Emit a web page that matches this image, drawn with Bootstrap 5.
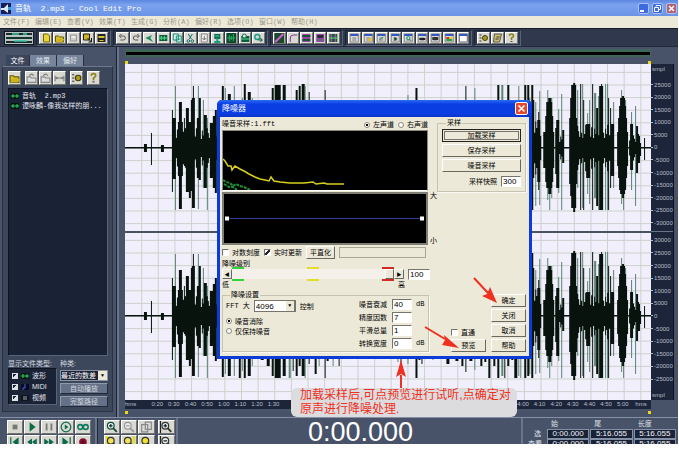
<!DOCTYPE html>
<html lang="zh">
<head>
<meta charset="utf-8">
<meta name="viewport" content="width=device-width, initial-scale=1">
<title>音轨 2.mp3 - Cool Edit Pro</title>
<link href="https://cdn.jsdelivr.net/npm/bootstrap@5.3.0/dist/css/bootstrap.min.css" rel="stylesheet">
<style>
body{background:#fff;font-family:"Liberation Sans","Noto Sans CJK SC",sans-serif;font-size:7px;line-height:9px;color:#000;overflow:hidden}
button,input,select{font:inherit;color:inherit;padding:0;margin:0;border-radius:0}
.app-win{height:calc(100vh - 17px);min-height:444px;margin-right:1px;background:#485268}
.mono{font-family:"Liberation Mono","Noto Sans CJK SC",monospace}
.titlebar{height:16px;background:linear-gradient(#5a87e0,#7ba1ee 30%,#6b94e6);color:#fff;font-size:8px;padding:0 1px}
.win-btns{gap:3px}
.win-btn{width:11px;height:11px;border:1px solid #a9c1f4;border-radius:2px;background:#3c6be0;line-height:0}
.win-btn.x{background:#b4606f}
.menubar{height:12px;background:#ece9d8;color:#9c988c;padding-left:3px}
.menubar a{width:32px;color:inherit;text-decoration:none;white-space:nowrap}
.toolbar{height:19px;background:#2f384c;border-top:1px solid #171d2a;border-bottom:1px solid #20283a;padding:1px 0 1px 2px}
.tgroup{height:16px;padding:1px 2px;border:1px solid #1b2232;border-right-color:#56617a;border-bottom-color:#56617a;margin-right:2px;gap:1px}
.ib{flex:1 1 0;min-width:0;background:#d9d9d2;border:1px solid #fff;border-right-color:#74746e;border-bottom-color:#74746e;display:flex;align-items:center;justify-content:center}
.ib svg{width:100%;height:100%}
.g1{width:75px}.g2{width:155px}.g3{width:73px}.g4{width:127px}.g5{width:47px}
.logo{width:30px;height:14px;background:#b8c0bd;border:1px solid #10161f;margin:1px 2px 0 2px}
.side{width:117px;padding:8px 3px 5px 2px;border-right:1px solid #1b2333}
.side-tab{height:11px;width:27px;background:#76859b;color:#e3e8ef;border:0;border-right:1px solid #28303f;line-height:10px}
.side-tab.on{width:24px;background:#3c465b;color:#fff}
.side-panel{background:#3d475c;border:1px solid #2a3244;border-top-color:#6d788e;padding:4px 4px 4px 5px;color:#d3d8df}
.side-tools{height:14px;gap:4px}
.side-tools .ib{flex:0 0 13px}
.side-tools .ib + .ib{margin-left:1px}
.well{background:#1a2236;border:1px solid #0e1422;border-right-color:#59647a;border-bottom-color:#59647a;color:#e4e7ee}
.files{padding:2px;margin:3px 0}
.files a{color:inherit;text-decoration:none;line-height:10px;white-space:pre;gap:3px}
.types{width:49px;height:37px;padding:1px 3px}
.types label{height:11px;gap:3px}
.types input{appearance:none;width:6px;height:6px;border:1px solid #dde1e6;background:linear-gradient(135deg,#1a2236 50%,#dde1e6 50%)}
.types svg,.files svg{width:8px;height:6px;flex:none}
.kind{width:48px;gap:2px}
.kind select{height:11px;width:48px;border:1px solid #8a93a2;background:#1a2236;color:#fff;appearance:none;overflow:hidden}
.kind .pick{display:grid}
.kind .pick > *{grid-area:1/1}
.kind .pick span{justify-self:end;width:9px;background:#ece9d8;color:#000;font-size:5px;text-align:center;margin:1px;pointer-events:none}
.kind button{height:11px;border:1px solid #8e9aac;border-right-color:#222a3a;border-bottom-color:#222a3a;background:#657188;color:#d2d7df;line-height:9px}
.stage{padding:2px 4px 3px 6px;border-left:2px solid #69758b;min-width:0}
.overview{height:8px;background:#000;border:solid #3e6557;border-width:3px 1px 2px;margin-right:23px}
.marks{height:7px;margin-right:23px}
.marks.low{height:5px}
.marks i{width:3px;height:3px;background:#e8d820}
.plot{background:#f1effc;min-width:0}
.plot svg{display:block;width:100%;height:100%}
.vruler{width:23px;background:#1c2539;color:#b9bfca;border-right:1px solid #0d1320;font-size:6px}
.vruler .ch{padding:2px 0}
.vruler .ch:first-child{border-bottom:1px solid #69738a}
.vruler .ch div{flex:1 1 0;min-height:0;display:flex;align-items:center;line-height:6px}
.vruler .ch div::before{content:"";width:2px;height:1px;background:#b9bfca;margin-right:1px}
.vruler .ch .u{align-items:flex-start;padding-left:1px}
.vruler .ch .u.end{align-items:flex-end}
.vruler .ch .u::before{content:none}
.hruler{height:9px;background:#1c2539;color:#b9bfca;margin-right:23px;font-size:6px}
.hruler span{flex:16.67 1 0;min-width:0;text-align:center;white-space:nowrap}
.hruler span:first-child{flex-grow:24;text-align:left}
.hruler span:last-child{flex-grow:20}
.deck{height:27px;overflow:hidden;border-top:1px solid #8390a6;background:#485268;color:#dfe3ea}
.keys{display:grid;grid-template-columns:repeat(5,16px);grid-auto-rows:14px;gap:1px;padding:2px 4px 0 7px;border-right:2px solid #69758b}
.keys.z{grid-template-columns:16px 16px 17px 17px;padding:2px 3px 0 6px;border-left:1px solid #20283a}
.keys.z .gapl{margin-left:2px;margin-right:-2px}
.clock{font-size:27px;line-height:24px;color:#fff;padding:2px 0 0 22px}
.times{border-left:2px solid #69758b;width:157px;padding:1px 1px 0 3px}
.times table{width:100%;border-collapse:separate;border-spacing:1px 0;table-layout:fixed}
.times th{font-weight:400;line-height:8px}
.times thead th{padding-left:4px}
.times col:first-child{width:19px}
.times tbody th{text-align:right;padding-right:5px;white-space:nowrap}
.times td{background:#1a2236;border:1px solid #8490a5;color:#f0f2f6;font-size:8px;line-height:8px;text-align:center;padding:0}
.dlg{position:absolute;left:217px;top:100px;width:315px;background:#ece9d8;border:3px solid #0b3bd9;border-top:0;border-radius:5px 5px 0 0}
.dlg-title{height:17px;margin:0 -3px;padding:0 4px 0 5px;border-radius:5px 5px 0 0;background:linear-gradient(#2a6af4,#0a3ee2 25%,#0a3ee2 80%,#0a35c8);color:#fff;font-size:8px}
.close-x{width:13px;height:13px;background:#e2492f;border:1px solid #fff;border-radius:2px;line-height:0}
.dlg-body{padding:2px 3px 4px 2px}
.left-col{width:208px}
.right-col{width:89px}
.dlg label{white-space:nowrap}
.opt{display:inline-flex;align-items:center;gap:3px}
.opt input[type=radio]{appearance:none;width:6px;height:6px;border:1px solid #8b897c;border-radius:50%;background:#fff}
.opt input[type=radio]:checked{background:radial-gradient(#000 35%,#fff 45%)}
.opt input[type=checkbox]{appearance:none;width:7px;height:7px;border:1px solid #76746a;border-right-color:#fff;border-bottom-color:#fff;background:#fff}
.opt input[type=checkbox]:checked{background:linear-gradient(135deg,#fff 30%,#222 40%,#222 60%,#fff 70%)}
.head-row{height:11px}
.head-row > div{gap:4px;padding-right:2px}
.graph{background:#000;width:206px}
.graph svg{display:block;width:100%;height:100%}
.spec{height:61px;border:1px solid #8b897c;border-bottom-color:#fff}
.curve{height:53px;border:2px solid #807e74;margin-top:1px}
.scale{margin-left:2px;width:0}
.check-row{height:15px;gap:4px}
.pb{height:13px;border:1px solid #fff;border-right-color:#6b695f;border-bottom-color:#6b695f;background:#ece9d8;line-height:11px;text-align:center}
.pb.flat{width:29px}
.pb.def{border:1px solid #222;outline:1px solid #77756b;outline-offset:-3px}
.tf{height:11px;border:1px solid #77756b;border-right-color:#fff;border-bottom-color:#fff;background:#fff;padding-left:1px;font-size:8px;min-width:0}
.tf.lvl{width:22px;margin-left:4px}
.tf.snap{width:20px}
.note-field{height:11px;border:1px solid #aaa797;width:87px;background:#ece9d8}
.sl{display:grid;width:182px;height:14px;grid-template-columns:10px 1fr 10px;align-items:center}
.sl button{height:10px;border:1px solid #fff;border-right-color:#6b695f;border-bottom-color:#6b695f;background:#ece9d8;font-size:5px;line-height:7px}
.sl .track{display:grid;height:14px}
.sl .track > *{grid-area:1/1}
.sl input{appearance:none;width:100%;height:10px;align-self:center;background:#f5f1ea}
.sl input::-webkit-slider-thumb{appearance:none;width:9px;height:10px;background:#ece9d8;border:1px solid #fff;border-right-color:#6b695f;border-bottom-color:#6b695f}
.ticks{pointer-events:none}
.ticks i{width:12px;border:solid;border-width:2px 0}
.ticks .lo{border-color:#2fd53b}.ticks .mid{border-color:#e4de2a}.ticks .hi{border-color:#d42a20}
.ends{width:183px;line-height:8px}
.fs{border:1px solid #c6c3b2;box-shadow:1px 1px 0 #fbfaf2;margin:0;min-width:0}
.fs legend{float:none;width:auto;font-size:7px;line-height:8px;margin:0 0 0 4px;padding:0 1px}
.nr{width:207px;padding:0 1px 2px 3px;margin-top:2px}
.fft-row{height:14px;gap:4px}
.modes{margin-top:3px}
.modes label{height:10px}
.params{display:grid;grid-template-columns:29px 20px 11px;column-gap:4px;row-gap:2px;align-items:center}
.smp{padding:2px 4px 4px;gap:2px}
.snap-row{gap:4px;margin-top:2px}
.ops{display:grid;grid-template-columns:35px 35px;column-gap:5px;row-gap:2px}
.fft{height:12px;width:42px;border:1px solid #77756b;background:#fff;font-size:8px;padding-left:1px;appearance:none}
.fftp{display:grid}.fftp>*{grid-area:1/1}
.fftp span{justify-self:end;width:9px;margin:1px;background:#ece9d8;font-size:5px;text-align:center;border-right:1px solid #77756b;pointer-events:none}
.over{position:absolute;pointer-events:none}
.arrows{left:420px;top:272px}
.arrow-up{left:395px;top:359px}
.bubble{position:absolute;left:291px;top:388px;width:226px;background:#dcdcdf;border-radius:6px;padding:0 0 1px 9px;color:#f0301c;font-size:12px;line-height:14px;white-space:nowrap}
</style>
<script src="https://cdn.jsdelivr.net/npm/bootstrap@5.3.0/dist/js/bootstrap.bundle.min.js"></script>
</head>
<body>
<main class="app-win d-flex flex-column overflow-hidden">
  <header class="titlebar mono d-flex align-items-center">
    <svg width="10" height="11" viewBox="0 0 10 11"><rect width="10" height="11" fill="#14205c"/><path d="M0 5h3l4-4v9L3 7H0z" fill="#dfe8fa"/><path d="M7 4h3v3H7z" fill="#35a0c8"/></svg>
    <span class="ms-1 text-nowrap">音轨 &nbsp;2.mp3 - Cool Edit Pro</span>
    <div class="win-btns d-flex ms-auto">
      <button class="win-btn" aria-label="最小化"><svg width="9" height="9"><path d="M1 7h4" stroke="#fff" stroke-width="2"/></svg></button>
      <button class="win-btn" aria-label="还原"><svg width="9" height="9"><path d="M3 2.500V1.500h4.500v4H6M1.500 3.500h4v4h-4z" fill="none" stroke="#fff"/></svg></button>
      <button class="win-btn x" aria-label="关闭"><svg width="9" height="9"><path d="M2 2l5 5M7 2L2 7" stroke="#fff" stroke-width="1.500"/></svg></button>
    </div>
  </header>
  <nav class="menubar mono d-flex align-items-center">
    <a href="#">文件(F)</a><a href="#">编辑(E)</a><a href="#">查看(V)</a><a href="#">效果(T)</a><a href="#">生成(G)</a><a href="#">分析(A)</a><a href="#">偏好(R)</a><a href="#">选项(O)</a><a href="#">窗口(W)</a><a href="#">帮助(H)</a>
  </nav>
  <div class="toolbar d-flex">
    <div class="logo"><svg width="28" height="12" viewBox="0 0 28 12"><path d="M0 0h28v12H0z" fill="#b9c4c0"/><path d="M1 2h26M1 10h26" stroke="#1d2a2c" stroke-width="2"/><path d="M1 6h26" stroke="#12332e" stroke-width="2"/><path d="M7 2h7M18 2h4M9 9h13" stroke="#36c2a6" stroke-width="1.500"/></svg></div>
    <div class="tgroup g1 d-flex" data-icons="new open save saveas batch"></div>
    <div class="tgroup g2 d-flex" data-icons="undo redo trim wave copy cut paste mixp wave2 find loop"></div>
    <div class="tgroup g3 d-flex" data-icons="fx1 curve fx2 fx3 fx4"></div>
    <div class="tgroup g4 d-flex" data-icons="win win2 win3 playw zoomw timew bars color panel"></div>
    <div class="tgroup g5 d-flex" data-icons="opts script help"></div>
  </div>

  <div class="d-flex flex-grow-1 overflow-hidden">
    <aside class="side d-flex flex-column">
      <div class="d-flex ps-1"><button class="side-tab on">文件</button><button class="side-tab">效果</button><button class="side-tab">偏好</button></div>
      <div class="side-panel d-flex flex-column flex-grow-1">
        <div class="side-tools d-flex"><div class="d-flex" data-icons="open"></div><div class="d-flex" data-icons="cf cf cfw"></div><div class="d-flex" data-icons="opts"></div><div class="d-flex" data-icons="help"></div></div>
        <div class="well files mono flex-grow-1">
          <a href="#" class="d-flex align-items-center"><svg viewBox="0 0 8 6"><rect width="8" height="6" fill="#03170c"/><path d="M0 3h8M2 1v4M6 1v4" stroke="#2fd06a"/></svg>音轨  2.mp3</a>
          <a href="#" class="d-flex align-items-center"><svg viewBox="0 0 8 6"><rect width="8" height="6" fill="#03170c"/><path d="M0 3h8M2 1v4M6 1v4" stroke="#2fd06a"/></svg>谭咏麟-像我这样的朋...</a>
        </div>
        <div class="d-flex justify-content-between">
          <div><div>显示文件类型:</div>
            <div class="well types d-flex flex-column">
              <label class="d-flex align-items-center"><input type="checkbox" checked><svg viewBox="0 0 8 6"><rect width="8" height="6" fill="#03170c"/><path d="M0 3h8M2 1v4M6 1v4" stroke="#2fd06a"/></svg>波形</label>
              <label class="d-flex align-items-center"><input type="checkbox" checked><svg viewBox="0 0 8 6"><rect width="8" height="6" fill="#060b20"/><path d="M4 0v4H2v2" stroke="#4468e0" fill="none"/></svg>MIDI</label>
              <label class="d-flex align-items-center"><input type="checkbox" checked><svg viewBox="0 0 8 6"><rect width="8" height="6" fill="#10141c"/><path d="M2 2h4M2 4h4" stroke="#9aa3a8"/></svg>视频</label>
            </div></div>
          <div class="kind d-flex flex-column"><label for="kind">种类:</label>
            <div class="pick"><select id="kind"><option>最近的数差</option></select><span>▼</span></div>
            <button>自动播放</button><button>完整路径</button></div>
        </div>
      </div>
    </aside>

    <section class="stage d-flex flex-column flex-grow-1">
      <div class="overview"></div>
      <div class="marks d-flex justify-content-between align-items-end"><i></i><i></i></div>
      <div class="d-flex flex-grow-1 overflow-hidden">
        <div class="plot flex-grow-1"><svg id="wave" viewBox="124 64 527 336" preserveAspectRatio="none" role="img" aria-label="波形"></svg></div>
        <div class="vruler d-flex flex-column" id="vr"></div>
      </div>
      <div class="hruler d-flex" id="hr"></div>
      <div class="marks low d-flex justify-content-between align-items-end"><i></i><i></i></div>
    </section>
  </div>

  <footer class="deck d-flex">
    <div class="keys" data-icons="stop play pause playc inf start rew ff end rec"></div>
    <div class="keys z" id="zk" data-icons="zin zout zfull zv zl zr zs zv2"></div>
    <div class="clock flex-grow-1 text-center">0:00.000</div>
    <div class="times"><table><colgroup><col><col><col><col></colgroup>
      <thead><tr><th></th><th>始</th><th>尾</th><th>长度</th></tr></thead>
      <tbody><tr><th>选</th><td>0:00.000</td><td>5:16.055</td><td>5:16.055</td></tr>
      <tr><th>查看</th><td>0:00.000</td><td>5:16.055</td><td>5:16.055</td></tr></tbody></table></div>
  </footer>
</main>

<div class="dlg" role="dialog" aria-label="降噪器">
  <div class="dlg-title d-flex align-items-center justify-content-between">降噪器
    <button class="close-x" aria-label="关闭"><svg width="11" height="11"><path d="M2.500 2.500l6 6M8.500 2.500l-6 6" stroke="#fff" stroke-width="1.600"/></svg></button></div>
  <div class="dlg-body d-flex justify-content-between">
    <div class="left-col">
      <div class="head-row d-flex align-items-center justify-content-between"><span class="mono">噪音采样:1.fft</span>
        <div class="d-flex"><label class="opt"><input type="radio" name="c" checked>左声道</label><label class="opt"><input type="radio" name="c">右声道</label></div></div>
      <div class="graph spec"><svg viewBox="0 0 204 59" preserveAspectRatio="none"><path d="M0 28l2 2 3 5 3 0 1 4 3-4 5 3 4 2 5 3 6 3 5 2 5 1 4 1 2-4 3 4 6 1 10 1 14 0 9-1 3 2 8-1 3 1 8 0h9" fill="none" stroke="#d6cf1d" stroke-width="1.500"/><path d="M0 49l3 2 4 1 3 3 3-2 4 2 4 1 6 3M1 53l5 3 4 0 4 3" fill="none" stroke="#1f8f35" stroke-width="2" stroke-dasharray="3 1"/></svg></div>
      <div class="d-flex"><div class="graph curve flex-shrink-0"><svg viewBox="0 0 202 49" preserveAspectRatio="none"><path d="M1 24.500h199" stroke="#2c3f9e"/><path d="M1 22.500h4v4H1zM196 22.500h4v4h-4z" fill="#fff"/></svg></div>
        <div class="scale d-flex flex-column justify-content-between"><span>大</span><span>小</span></div></div>
      <div class="check-row d-flex align-items-center"><label class="opt">
        <input type="checkbox">对数刻度</label><label class="opt"><input type="checkbox" checked>实时更新</label><button class="pb flat">平直化</button><div class="note-field"></div></div>
      <div class="lh-1">降噪级别</div>
      <div class="d-flex align-items-center"><div class="sl"><button aria-label="减">◀</button><div class="track"><input type="range" value="100" aria-label="降噪级别"><div class="ticks d-flex justify-content-between"><i class="lo"></i><i class="mid"></i><i class="hi"></i></div></div><button aria-label="加">▶</button></div><input class="tf lvl" value="100" aria-label="级别"></div>
      <div class="ends d-flex justify-content-between"><span>低</span><span>高</span></div>
      <fieldset class="fs nr"><legend>降噪设置</legend>
        <div class="d-flex justify-content-between">
          <div><div class="fft-row d-flex align-items-center"><label for="fft" class="mono">FFT 大</label><div class="fftp"><select id="fft" class="fft"><option>4096</option></select><span>▼</span></div>控制</div>
            <div class="modes d-flex flex-column"><label class="opt"><input type="radio" name="m" checked>噪音消除</label><label class="opt"><input type="radio" name="m">仅保持噪音</label></div></div>
          <div class="params">
            <label for="a1">噪音衰减</label><input id="a1" class="tf" value="40"><span class="mono">dB</span>
            <label for="a2">精度因数</label><input id="a2" class="tf" value="7"><span></span>
            <label for="a3">平滑总量</label><input id="a3" class="tf" value="1"><span></span>
            <label for="a4">转换宽度</label><input id="a4" class="tf" value="0"><span class="mono">dB</span></div>
        </div></fieldset>
    </div>
    <div class="right-col d-flex flex-column justify-content-between">
      <fieldset class="fs smp d-flex flex-column"><legend>采样</legend>
        <button class="pb def">加载采样</button><button class="pb">保存采样</button><button class="pb">噪音采样</button>
        <div class="snap-row d-flex justify-content-end align-items-center"><label for="snap">采样快照</label><input id="snap" class="tf snap" value="300"></div></fieldset>
      <div class="ops align-self-end"><span></span><button class="pb">确定</button><span></span><button class="pb">关闭</button><label class="opt align-self-end"><input type="checkbox">直通</label><button class="pb">取消</button><button class="pb">预览</button><button class="pb">帮助</button></div>
    </div>
  </div>
</div>

<svg class="over arrows" width="82" height="82" viewBox="420 272 82 82"><path d="M474 278l14 15M425 327l20 12" stroke="#f03020" stroke-width="2"/><path d="M497 303l-15-7 5-2 3-7zM459 348l-17-3 3-5-1-5z" fill="#f03020"/></svg>
<div class="bubble">加载采样后,可点预览进行试听,点确定对<br>原声进行降噪处理.</div>
<svg class="over arrow-up" width="12" height="30"><path d="M6 16v13" stroke="#f03020" stroke-width="2"/><path d="M6 1l5 17-5-3-5 3z" fill="#f03020"/></svg>

<script>
const ic={
 new:'<path d="M3 1h4l2 2v6H3z" fill="#e8d436" stroke="#75680a"/>',
 open:'<path d="M1 3h3l1 1h4v5H1z" fill="#d8bf22" stroke="#665a08"/><path d="M3 6h7L8 9H1z" fill="#c9b31f"/>',
 save:'<path d="M2 2h6v6H2z" fill="#ccc" stroke="#999"/><path d="M3 3h4v2H3z" fill="#eee"/>',
 saveas:'<path d="M1 1h6v6H1z" fill="#c9b622" stroke="#222"/><path d="M5 5l4 4M9 5v4H6" stroke="#111" fill="none"/>',
 batch:'<path d="M1 1h8v8H1z" fill="#222"/><path d="M2 3h6v2H2z" fill="#d8c52c"/><path d="M3 7h4v1H3z" fill="#d8c52c"/>',
 undo:'<path d="M3 7h3a2 2 0 0 0 0-4H3M4 1L2 3l2 2" fill="none" stroke="#555"/>',
 redo:'<path d="M7 7H4a2 2 0 0 1 0-4h3M6 1l2 2-2 2" fill="none" stroke="#555"/>',
 trim:'<path d="M1 5l7-3-2 3 3 4-4-2z" fill="#1c8a5c"/>',
 wave:'<path d="M1 2h8v6H1z" fill="#0c5c3c"/><path d="M1 5h8M3 3v4M6 3v4" stroke="#50e08a"/>',
 copy:'<path d="M1 1h5v6H1zM4 3h5v6H4z" fill="#d8f0e8" stroke="#1c8f78"/><path d="M5 6h3" stroke="#1c8f78"/>',
 cut:'<path d="M3 1l3 5M7 1L4 6" stroke="#14706a"/><circle cx="3" cy="8" r="1.300" fill="none" stroke="#14706a"/><circle cx="7" cy="8" r="1.300" fill="none" stroke="#14706a"/>',
 paste:'<path d="M2 1h6v8H2z" fill="#eee" stroke="#888"/><path d="M5 3v4M3 5l2 2 2-2" stroke="#777" fill="none"/>',
 mixp:'<path d="M2 1h6v5H2z" fill="#0c6a50"/><path d="M3 3h4" stroke="#5fe0a0"/><path d="M5 5v4M2 9h6" stroke="#14a080" stroke-width="2"/>',
 wave2:'<path d="M0 0h10v10H0z" fill="#0d4a2b"/><path d="M1 5h8M3 2v6M5 3v4M7 1v7" stroke="#2fb060"/>',
 find:'<path d="M1 3h8v6H1z" fill="#0c5c3c"/><path d="M1 6h8" stroke="#50e08a"/><circle cx="4" cy="3" r="2" fill="#c9eadf" stroke="#1c6f58"/>',
 loop:'<circle cx="4" cy="4" r="2.500" fill="none" stroke="#1c9f88" stroke-width="1.500"/><path d="M5 7h4M7 5l2 2-2 2" stroke="#0a5a40" fill="none"/>',
 fx1:'<path d="M0 0h10v10H0z" fill="#1b4a2a"/><path d="M1 9l8-8" stroke="#d060d0" stroke-width="2"/>',
 curve:'<path d="M2 9V5q0-3 3-3h4" fill="none" stroke="#7a3a90"/>',
 fx2:'<path d="M1 1h8v8H1z" fill="#a040b0"/><path d="M1 3h8M1 7h8" stroke="#115a30" stroke-width="2"/>',
 fx3:'<path d="M1 1h8v8H1z" fill="#a040b0"/><path d="M2 2h6v3H2z" fill="#20302a"/><path d="M1 7h8" stroke="#2f8a50"/>',
 fx4:'<path d="M1 1h8v8H1z" fill="#205a34"/><path d="M3 1v8M7 1v8" stroke="#c050c8"/><path d="M1 5h8" stroke="#50e080"/>',
 win:'<path d="M1 1h8v8H1z" fill="#ddd" stroke="#888"/><path d="M1 1h8v2H1z" fill="#3558c0"/><path d="M3 5h4M3 7h4" stroke="#777"/>',
 opts:'<path d="M1 2h2M1 5h2M1 8h2" stroke="#333"/><circle cx="6.500" cy="5" r="2.500" fill="#a99b22" stroke="#443d08"/>',
 script:'<path d="M2 1h7L7 9H1z" fill="#cfc06a" stroke="#555"/><path d="M4 4h3M3 6h3" stroke="#333"/>',
 help:'<path d="M3 3q0-2 2-2t2 2q0 1-2 2v2" fill="none" stroke="#8b8118" stroke-width="1.500"/><path d="M4 8h2v1H4z" fill="#444"/>',
 cf:'<path d="M1 4h3l1 1h4v4H1z" fill="#ddd" stroke="#888"/><path d="M3 3q2-3 4 0" stroke="#777" fill="none"/>',
 cfw:'<path d="M1 3v5M9 3v5M2 5h6M3 4L2 5l1 1M7 4l1 1-1 1" stroke="#777" fill="none"/>',
 stop:'<path d="M3 3h4v4H3z" fill="#777"/>',play:'<path d="M3 1l5 4-5 4z" fill="#0c6a4c"/>',
 pause:'<path d="M3 2v6M7 2v6" stroke="#777" stroke-width="1.500"/>',
 playc:'<circle cx="5" cy="5" r="4" fill="none" stroke="#0c6a4c"/><path d="M4 3l3 2-3 2z" fill="#0c6a4c"/>',
 inf:'<circle cx="2.700" cy="5" r="2" fill="none" stroke="#0c7a5c" stroke-width="1.300"/><circle cx="7.300" cy="5" r="2" fill="none" stroke="#0c7a5c" stroke-width="1.300"/>',
 start:'<path d="M1 1h1v8H1zM8 1v8L3 5z" fill="#0c6a4c"/>',rew:'<path d="M5 2v6L1 5zM9 2v6L5 5z" fill="#0c6a4c"/>',
 ff:'<path d="M1 2v6l4-3zM5 2v6l4-3z" fill="#0c6a4c"/>',end:'<path d="M8 1h1v8H8zM2 1v8l5-4z" fill="#0c6a4c"/>',
 rec:'<circle cx="5" cy="5" r="3.200" fill="#8a1238"/><path d="M3 5h4M5 3v4" stroke="#5a0820"/>'
};
const w=x=>ic.win+x;
ic.win2=w('<path d="M5 5h3v3H5z" fill="#e0c020"/>');ic.win3=w('<path d="M3 7l4-3" stroke="#2a8a60"/>');
ic.playw=w('<path d="M4 4l3 2-3 2z" fill="#0a4a30"/>');ic.zoomw=w('<circle cx="5" cy="5" r="1.500" fill="#cfe" stroke="#286"/><path d="M6 6l2 2" stroke="#286"/>');
ic.timew=w('<path d="M2 5h6v2H2z" fill="#222"/>');ic.bars=w('<path d="M2 4h6v3H2z" fill="#333"/>');
ic.color=w('<path d="M2 4h3v2H2z" fill="#d03030"/><path d="M5 4h3v2H5z" fill="#e0d020"/><path d="M2 6h6v2H2z" fill="#30a040"/>');
ic.panel='<path d="M1 1h8v8H1z" fill="#fff" stroke="#667"/><path d="M1 1h8v2H1z" fill="#3558c0"/>';
const lens=(c,f,x)=>`<circle cx="4" cy="4" r="2.800" fill="${f}" stroke="${c}"/><path d="M6 6l3 3" stroke="${c}" stroke-width="1.500"/>${x}`;
ic.zin=lens('#164a38','#dff','<path d="M2.500 4h3M4 2.500v3" stroke="#222"/>');ic.zout=lens('#999','#eee','<path d="M2.500 4h3" stroke="#999"/>');
ic.zfull='<path d="M1 3h5v6H1zM4 1h5v6H4z" fill="#ddd" stroke="#888"/>';
ic.zv=lens('#333','#dee','<path d="M2.500 4h3M4 2.500v3M0 0v10" stroke="#222"/>');ic.zv2=lens('#333','#dee','<path d="M2.500 4h3M0 0v10" stroke="#222"/>');
ic.zl='<path d="M0 0h2v10H0z" fill="#e6dc20"/>'+lens('#333','#eee25a','');ic.zr='<path d="M8 0h2v10H8z" fill="#e6dc20"/>'+lens('#333','#eee25a','');ic.zs=lens('#333','#f0e030','');
document.querySelectorAll('[data-icons]').forEach(g=>{
  g.innerHTML=g.dataset.icons.split(' ').map(n=>`<button class="ib" aria-label="${n}"><svg viewBox="0 0 10 10">${ic[n]}</svg></button>`).join('');
});
document.querySelectorAll('#zk .ib:nth-child(4n)').forEach(b=>b.classList.add('gapl'));

/* bars: x, width, height above, height below; g = light trace */
const bars=`143,3,4,4 150,1,15,17 160,3,3,4 171,1,38,44 172,3,30,31 174,1,62,62g 178,3,46,61 177,5,26,28 183,1,30,18 185,3,40,44 188,2,26,50
190,4,48,43 192,1,62,55 191,3,50,60 196,2,30,30 197,1,62,61g 198,2,50,32 202,1,48,40g 203,3,33,40 206,1,30,62g 209,3,25,30 212,2,32,40 214,2,38,45
217,2,30,35 221,2,62,61 224,1,60,58g 227,3,54,60 233,1,62,60g 238,2,40,62 241,1,50,55g 243,2,64,62 247,3,56,60 251,1,50,50g 254,3,30,40
260,3,30,44 266,3,40,50 271,2,60,60 274,6,63,62 282,3,63,60 288,2,40,62g 292,1,40,55 295,2,58,60 298,2,62,50 301,3,64,60 304,1,62,62g 308,1,56,48 314,2,40,58 318,1,30,50g 324,1,58,62 326,2,46,45 332,1,30,50g 338,1,40,50
345,3,30,30 360,4,30,32 375,2,40,40 390,4,30,40 397,1,40,46g 400,1,35,50 407,1,53,48g 415,2,60,62 418,2,40,44 421,1,30,48 432,1,30,44g 446,3,40,48 449,1,48,40g
455,3,30,45 461,2,40,50 465,1,62,56 469,3,40,45 474,1,60,54g 480,2,30,50 484,2,40,46 488,2,40,62 493,2,40,50 497,2,63,62 501,2,63,60g 504,1,40,62 507,2,63,50 511,2,40,44 514,3,40,62 518,1,62,60g 520,1,40,62g 524,2,63,62 527,2,63,60
529,1,50,58g 531,2,63,62 533,1,48,30 535,1,46,58g 537,3,28,34 538,1,36,42 539,1,57,57g 543,11,16,20 545,8,32,34 546,6,46,40 547,1,58,52g 548,3,50,46 549,1,40,62g 551,1,50,50g
555,1,20,26 556,3,28,40 558,1,39,45g 561,1,54,62g 562,2,18,15 569,8,30,36 570,6,50,48 571,5,63,60 573,2,65,64 577,1,58,40g 580,1,64,62 582,1,64,60g 583,1,48,62 586,4,24,30 587,1,35,46g 589,1,48,56g 592,1,64,62 594,2,55,50g 596,2,40,58
598,1,52,62g 599,4,62,62 601,1,64,62 605,1,64,62g 607,1,64,62g 608,1,50,62 610,1,40,40 611,3,24,28 613,1,46,40g 617,11,16,18 618,9,30,30 619,7,42,42 620,5,50,46 621,1,58,56g 622,2,52,50 623,1,40,62g 625,1,48,40g
630,3,24,22 631,1,36,42g 635,1,42,58g 636,2,22,25 638,2,12,15 640,1,5,8 644,1,10,12`.split(/\s+/);
const body=[[171,60,18],[231,25,20],[258,35,22],[294,12,20],[312,18,12],[396,12,14],[412,10,16],[446,31,18],[481,48,22],[531,10,24],[555,9,12],[569,45,20],[629,11,12]];
let s='<path stroke="#cdd2cb" d="';
for(let x=124+16.67;x<651;x+=16.67)s+=`M${x.toFixed(1)} 64v336`;
for(const c of [148,316])for(let k=-6;k<=6;k++)s+=`M124 ${(c+k*12.6).toFixed(1)}h527`;
s+='"/>';
for(const c of [148,316]){
  let d='',g='';
  for(const b of bars){const p=b.replace('g','').split(',').map(Number),t=`M${p[0]} ${c-p[2]}h${p[1]}v${p[2]+p[3]}h-${p[1]}z`;b.endsWith('g')?g+=t:d+=t;}
  for(const [x,n,a] of body)for(let i=0;i<n;i++){const h=a*(.5+((i*7+x)%11)/15);d+=`M${x+i} ${c-h}h1v${2*h}h-1z`;}
  s+=`<path fill="#5d8276" d="${g}"/><path fill="#08130d" d="${d}M124 ${c-1}h527v1.500h-527z"/>`;
}
s+='<path d="M124 232h527" stroke="#49525f" stroke-width="2"/>';
document.getElementById('wave').innerHTML=s;
const n=[];for(let v=30000;v>=-30000;v-=5000)n.push(v);
const rows=(a,f,l)=>'<div class="ch d-flex flex-column flex-fill h-50">'+a.map((v,i)=>i==f?'<div class="u'+(l?' end':'')+'">smpl</div>':`<div>${v}</div>`).join('')+'</div>';
document.getElementById('vr').innerHTML=rows(n,0,false)+rows(n,12,true);
/* the note bubble lies over 1:40 to 3:50, so those ticks carry no label */
let h='<span>hms</span>';
for(let t=20;t<=300;t+=10)h+=t>=100&&t<=230?'<span></span>':`<span>${Math.floor(t/60)}:${String(t%60).padStart(2,'0')}</span>`;
document.getElementById('hr').innerHTML=h+'<span>hms</span>';
</script>
</body>
</html>
